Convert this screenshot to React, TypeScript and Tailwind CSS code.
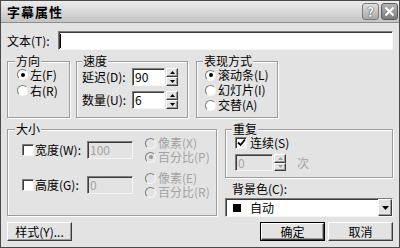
import React from "react";

const sunken =
  "border border-t-[#7c7c7c] border-l-[#7c7c7c] border-r-[#f6f6f6] border-b-[#f6f6f6] shadow-[inset_1px_1px_0_#3c3c3c]";
const raised =
  "border border-t-white border-l-white border-r-[#3c3c3c] border-b-[#3c3c3c] shadow-[inset_-1px_-1px_0_#9c9c9c]";
const group = "border border-[#9c9c9c] shadow-[inset_1px_1px_0_#fff,1px_1px_0_#fff]";
const legend = "px-[1px] bg-[#e3e3e3]";

function Radio({ on, dis }: { on?: boolean; dis?: boolean }) {
  return (
    <span
      className={`w-[11px] h-[11px] rounded-full shrink-0 flex items-center justify-center border border-t-[#7c7c7c] border-l-[#7c7c7c] border-r-[#f6f6f6] border-b-[#f6f6f6] ${
        dis ? "bg-[#e3e3e3]" : "bg-white"
      }`}
    >
      {on && <span className={`w-[4px] h-[4px] rounded-full ${dis ? "bg-[#9a9a9a]" : "bg-black"}`} />}
    </span>
  );
}

function RadioRow({ label, on, dis, h = "h-[13px]" }: { label: string; on?: boolean; dis?: boolean; h?: string }) {
  return (
    <div className={`flex items-center gap-[2px] ${h}`}>
      <Radio on={on} dis={dis} />
      <span className={dis ? "text-[#a3a3a3]" : ""}>{label}</span>
    </div>
  );
}

function Check({ on }: { on?: boolean }) {
  return (
    <span className={`w-[12px] h-[12px] shrink-0 bg-white flex items-center justify-center ${sunken}`}>
      {on && (
        <svg width="9" height="9" viewBox="0 0 9 9">
          <path d="M1 4.5 L3.5 7 L8 1.5" stroke="#000" strokeWidth="1.8" fill="none" />
        </svg>
      )}
    </span>
  );
}

function Spin({ dis }: { dis?: boolean }) {
  const fill = dis ? "#a0a0a0" : "#000";
  return (
    <div className="ml-[1px] w-[12px] h-full flex flex-col">
      <div className={`flex-1 flex items-center justify-center bg-[#e3e3e3] ${raised}`}>
        <svg width="5" height="3" viewBox="0 0 5 3">
          <path d="M0 3 L2.5 0 L5 3Z" fill={fill} />
        </svg>
      </div>
      <div className={`flex-1 flex items-center justify-center bg-[#e3e3e3] ${raised}`}>
        <svg width="5" height="3" viewBox="0 0 5 3">
          <path d="M0 0 L2.5 3 L5 0Z" fill={fill} />
        </svg>
      </div>
    </div>
  );
}

function Btn({ children, def, className = "" }: { children: React.ReactNode; def?: boolean; className?: string }) {
  return (
    <div className={`w-[65px] h-full ${def ? "border border-black" : ""} ${className}`}>
      <div className={`w-full h-full bg-[#e3e3e3] flex items-center justify-center ${raised}`}>{children}</div>
    </div>
  );
}

export default function App() {
  return (
    <div className="w-[400px] h-[248px] overflow-hidden border border-[#4a4a4a] bg-[#e3e3e3] flex flex-col text-[12px] leading-[14px] text-black font-['Noto_Sans_CJK_SC','Liberation_Sans',sans-serif]">
      {/* title bar */}
      <div className="h-[22px] shrink-0 flex items-center justify-between pl-[6px] pr-[1px] bg-linear-to-b from-[#ececec] to-[#c4c4c4] border-b border-[#8e8e8e]">
        <span className="font-bold text-[13px] tracking-[1px]">字幕属性</span>
        <div className="flex items-center gap-[2px]">
          <div className="w-[17px] h-[17px] rounded-[3px] border border-[#7a7a7a] bg-linear-to-b from-[#e0e0e0] to-[#a8a8a8] flex items-center justify-center text-[13px] font-bold text-white [text-shadow:0_0_1px_#333,0_0_1px_#333]">
            ?
          </div>
          <div className="w-[17px] h-[17px] rounded-[3px] border border-[#5a5a5a] bg-linear-to-b from-[#b4b4b4] to-[#7c7c7c] flex items-center justify-center">
            <svg width="11" height="11" viewBox="0 0 11 11">
              <path d="M1.5 1.5 L9.5 9.5 M9.5 1.5 L1.5 9.5" stroke="#fff" strokeWidth="2" />
            </svg>
          </div>
        </div>
      </div>

      <div className="flex-1 flex flex-col px-[6px]">
        {/* text row */}
        <div className="mt-[8px] h-[19px] flex items-center">
          <span className="w-[51px]">文本(T):</span>
          <div className={`flex-1 h-full bg-white flex items-center pl-[1px] ${sunken}`}>
            <div className="w-px h-[14px] bg-black" />
          </div>
        </div>

        {/* first groups row */}
        <div className="mt-[4px] h-[64px] flex">
          <fieldset className={`w-[63px] h-full ${group}`}>
            <legend className={`ml-[7px] ${legend}`}>方向</legend>
            <div className="pl-[9px] flex flex-col gap-[3px]">
              <RadioRow label="左(F)" on />
              <RadioRow label="右(R)" />
            </div>
          </fieldset>

          <fieldset className={`ml-[6px] w-[112px] h-full ${group}`}>
            <legend className={`ml-[5px] ${legend}`}>速度</legend>
            <div className="pl-[5px] flex flex-col gap-[5px]">
              <div className="h-[18px] flex items-center">
                <span className="w-[50px]">延迟(D):</span>
                <div className={`w-[33px] h-full bg-white flex items-center pl-[2px] ${sunken}`}>90</div>
                <Spin />
              </div>
              <div className="h-[18px] flex items-center">
                <span className="w-[50px]">数量(U):</span>
                <div className={`w-[33px] h-full bg-white flex items-center pl-[2px] ${sunken}`}>6</div>
                <Spin />
              </div>
            </div>
          </fieldset>

          <fieldset className={`ml-[8px] w-[82px] h-full ${group}`}>
            <legend className={`ml-[6px] ${legend}`}>表现方式</legend>
            <div className="pl-[8px] flex flex-col gap-[1px]">
              <RadioRow label="滚动条(L)" on h="h-[14px]" />
              <RadioRow label="幻灯片(I)" h="h-[14px]" />
              <RadioRow label="交替(A)" h="h-[14px]" />
            </div>
          </fieldset>
        </div>

        {/* second groups row */}
        <div className="mt-[4px] h-[95px] flex">
          <fieldset className={`w-[210px] h-[94px] ${group}`}>
            <legend className={`ml-[7px] ${legend}`}>大小</legend>
            <div className="pl-[14px] flex flex-col gap-[7px]">
              <div className="h-[28px] flex items-center">
                <Check />
                <span className="ml-[1px] w-[52px]">宽度(W):</span>
                <div className={`w-[46px] h-[18px] bg-[#e3e3e3] text-[#a3a3a3] flex items-center pl-[2px] ${sunken}`}>100</div>
                <div className="ml-[12px] flex flex-col">
                  <RadioRow label="像素(X)" dis h="h-[14px]" />
                  <RadioRow label="百分比(P)" dis on h="h-[14px]" />
                </div>
              </div>
              <div className="h-[28px] flex items-center">
                <Check />
                <span className="ml-[1px] w-[52px]">高度(G):</span>
                <div className={`w-[46px] h-[18px] bg-[#e3e3e3] text-[#a3a3a3] flex items-center pl-[2px] ${sunken}`}>0</div>
                <div className="ml-[12px] flex flex-col">
                  <RadioRow label="像素(E)" dis h="h-[14px]" />
                  <RadioRow label="百分比(R)" dis h="h-[14px]" />
                </div>
              </div>
            </div>
          </fieldset>

          <div className="ml-[8px] flex-1 flex flex-col">
            <fieldset className={`h-[56px] ${group}`}>
              <legend className={`ml-[6px] ${legend}`}>重复</legend>
              <div className="pl-[9px] flex flex-col">
                <div className="h-[13px] flex items-center gap-[3px]">
                  <Check on />
                  <span>连续(S)</span>
                </div>
                <div className="mt-[5px] h-[17px] flex items-center">
                  <div className={`w-[38px] h-full bg-[#e3e3e3] text-[#a3a3a3] flex items-center pl-[2px] ${sunken}`}>0</div>
                  <Spin dis />
                  <span className="ml-[11px] text-[#a3a3a3]">次</span>
                </div>
              </div>
            </fieldset>
            <span className="mt-[4px] h-[13px] pl-[7px]">背景色(C):</span>
            <div className={`mt-[3px] h-[19px] bg-white flex items-center ${sunken}`}>
              <span className="ml-[7px] w-[8px] h-[8px] bg-black" />
              <span className="ml-[9px] flex-1">自动</span>
              <div className={`w-[14px] h-full bg-[#e3e3e3] flex items-center justify-center ${raised}`}>
                <svg width="7" height="4" viewBox="0 0 7 4">
                  <path d="M0 0 L3.5 4 L7 0Z" fill="#000" />
                </svg>
              </div>
            </div>
          </div>
        </div>

        {/* buttons */}
        <div className="mt-[5px] h-[19px] flex">
          <Btn>样式(Y)...</Btn>
          <div className="flex-1" />
          <Btn def>确定</Btn>
          <Btn className="ml-[3px]">取消</Btn>
        </div>
      </div>
    </div>
  );
}
